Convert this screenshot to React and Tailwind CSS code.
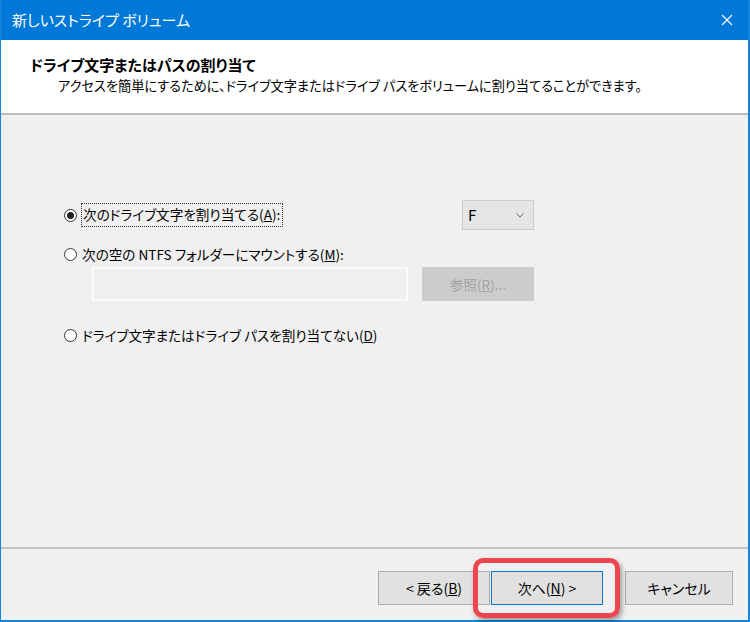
import React from 'react';

const jp = "font-['Noto_Sans_CJK_JP','Noto_Sans',sans-serif] [font-feature-settings:'palt']";

const Radio = ({ checked }) => (
  <span className="flex h-[13px] w-[13px] shrink-0 items-center justify-center rounded-full border border-[#333] bg-white">
    {checked && <span className="h-[7px] w-[7px] rounded-full bg-[#222]" />}
  </span>
);

const Btn = ({ children, focused, className = '' }) => (
  <div
    className={`flex h-[34px] items-center justify-center border bg-[#e1e1e1] text-[14px] text-black ${
      focused ? 'border-[#0078d7]' : 'border-[#adadad]'
    } ${className}`}
  >
    {children}
  </div>
);

export default function App() {
  return (
    <div className={`flex h-[622px] w-[750px] flex-col border-r-2 border-b-2 border-l border-[#1883d7] bg-[#f0f0f0] ${jp}`}>
      {/* title bar */}
      <div className="flex h-[40px] shrink-0 items-center justify-between bg-[#0078d7] pl-[11px] pr-[15px]">
        <span className="text-[15px] text-white">新しいストライプ ボリューム</span>
        <svg width="12" height="12" viewBox="0 0 12 12" className="text-white">
          <path d="M1 1l10 10M11 1L1 11" stroke="currentColor" strokeWidth="1.1" fill="none" />
        </svg>
      </div>

      {/* header */}
      <div className="h-[75px] shrink-0 border-b-2 border-[#bdbdbd] bg-white pl-[29px] pt-[15px]">
        <div className="text-[15px] font-bold leading-[20px] text-black">ドライブ文字またはパスの割り当て</div>
        <div className="pl-[28px] text-[13.2px] leading-[22px] text-black">
          アクセスを簡単にするために、ドライブ文字またはドライブ パスをボリュームに割り当てることができます。
        </div>
      </div>

      {/* body */}
      <div className="flex-1 pl-[63px] pt-[85px]">
        <div className="flex w-[470px] flex-col text-[13.6px] text-black">
          <div className="flex h-[30px] items-center justify-between">
            <div className="flex items-center">
              <Radio checked />
              <span className="ml-[4px] flex h-[24px] items-center border border-dotted border-[#333] pl-[1px] pr-[2px] leading-none">
                次のドライブ文字を割り当てる(<span className="underline">A</span>):
              </span>
            </div>
            <div className="flex h-[30px] w-[72px] items-center justify-between border border-[#cccccc] bg-[#e5e5e5] pl-[5px] pr-[9px]">
              <span className="text-[15px]">F</span>
              <svg width="8" height="5" viewBox="0 0 8 5">
                <path d="M0.5 0.5L4 4L7.5 0.5" stroke="#666" strokeWidth="1" fill="none" />
              </svg>
            </div>
          </div>

          <div className="mt-[14px] flex h-[20px] items-center">
            <Radio />
            <span className="ml-[5px]">
              次の空の NTFS フォルダーにマウントする(<span className="underline">M</span>):
            </span>
          </div>

          <div className="mt-[3px] flex h-[34px] items-center pl-[28px]">
            <div className="h-[34px] w-[316px] border-2 border-[#fbfbfb] bg-[#f0f0f0]" />
            <div className="ml-[14px] flex h-[34px] w-[112px] items-center justify-center bg-[#cccccc] text-[#a3a3a3]">
              参照(<span className="underline">R</span>)...
            </div>
          </div>

          <div className="mt-[24px] flex h-[20px] items-center">
            <Radio />
            <span className="ml-[5px]">
              ドライブ文字またはドライブ パスを割り当てない(<span className="underline">D</span>)
            </span>
          </div>
        </div>
      </div>

      {/* footer */}
      <div className="flex h-[73px] shrink-0 items-start justify-end border-t-2 border-[#c4c4c4] pr-[15px] pt-[22px]">
        <Btn className="w-[112px]">
          &lt; 戻る(<span className="underline">B</span>)
        </Btn>
        <div className="relative ml-[1px]">
          <Btn focused className="w-[112px]">
            次へ(<span className="underline">N</span>) &gt;
          </Btn>
          <div className="pointer-events-none absolute -bottom-[13px] -left-[18px] -right-[17px] -top-[13px] rounded-[10px] border-[5px] border-[#ec4750] shadow-[2px_3px_5px_rgba(0,0,0,0.35)]" />
        </div>
        <Btn className="ml-[22px] w-[108px]">キャンセル</Btn>
      </div>
    </div>
  );
}
